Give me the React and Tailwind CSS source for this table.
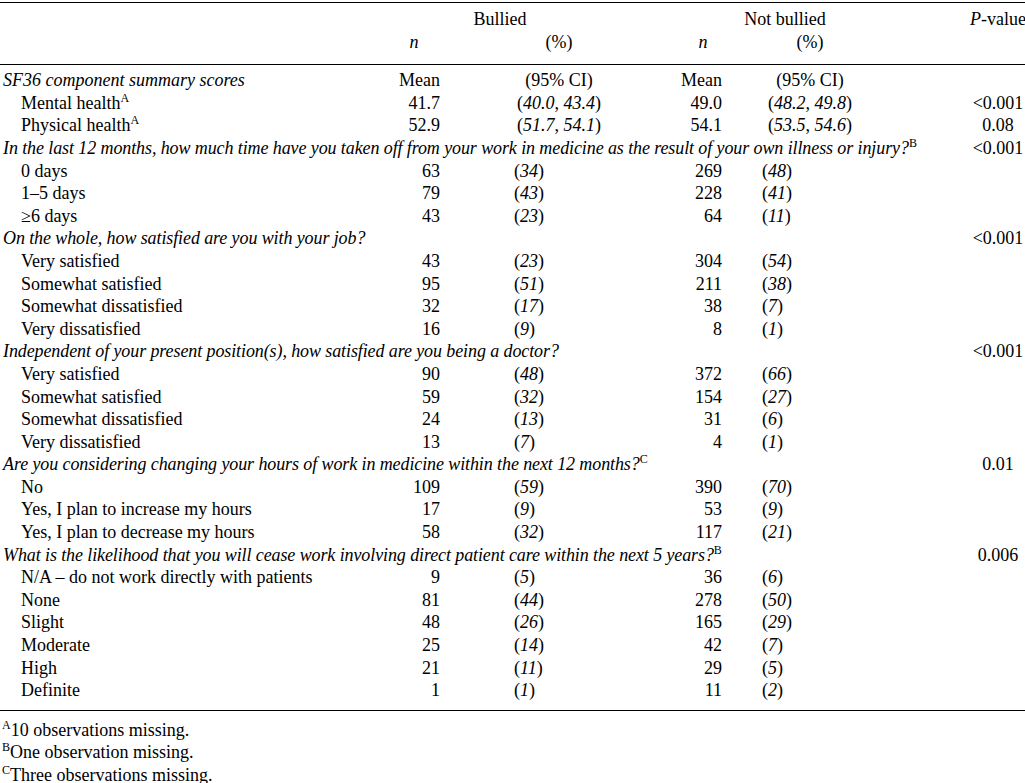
import React from 'react'

const SECTIONS = [
  {
    q: 'In the last 12 months, how much time have you taken off from your work in medicine as the result of your own illness or injury?',
    sup: 'B',
    p: '<0.001',
    rows: [
      ['0 days', '63', '34', '269', '48'],
      ['1–5 days', '79', '43', '228', '41'],
      ['≥6 days', '43', '23', '64', '11'],
    ],
  },
  {
    q: 'On the whole, how satisfied are you with your job?',
    p: '<0.001',
    rows: [
      ['Very satisfied', '43', '23', '304', '54'],
      ['Somewhat satisfied', '95', '51', '211', '38'],
      ['Somewhat dissatisfied', '32', '17', '38', '7'],
      ['Very dissatisfied', '16', '9', '8', '1'],
    ],
  },
  {
    q: 'Independent of your present position(s), how satisfied are you being a doctor?',
    p: '<0.001',
    rows: [
      ['Very satisfied', '90', '48', '372', '66'],
      ['Somewhat satisfied', '59', '32', '154', '27'],
      ['Somewhat dissatisfied', '24', '13', '31', '6'],
      ['Very dissatisfied', '13', '7', '4', '1'],
    ],
  },
  {
    q: 'Are you considering changing your hours of work in medicine within the next 12 months?',
    sup: 'C',
    p: '0.01',
    rows: [
      ['No', '109', '59', '390', '70'],
      ['Yes, I plan to increase my hours', '17', '9', '53', '9'],
      ['Yes, I plan to decrease my hours', '58', '32', '117', '21'],
    ],
  },
  {
    q: 'What is the likelihood that you will cease work involving direct patient care within the next 5 years?',
    sup: 'B',
    p: '0.006',
    rows: [
      ['N/A – do not work directly with patients', '9', '5', '36', '6'],
      ['None', '81', '44', '278', '50'],
      ['Slight', '48', '26', '165', '29'],
      ['Moderate', '25', '14', '42', '7'],
      ['High', '21', '11', '29', '5'],
      ['Definite', '1', '1', '11', '2'],
    ],
  },
]

const GRID = 'grid w-[1098px] grid-cols-[380px_60px_238px_44px_176px_200px]'

function Sup({ children }) {
  return <sup className="text-[12px] not-italic relative -top-[7px] align-baseline">{children}</sup>
}

function Pct({ v }) {
  return <>(<i>{v}</i>)</>
}

export default function App() {
  return (
    <div className="w-[1025px] min-h-[783px] overflow-hidden bg-white text-black font-['Liberation_Serif',serif] text-[18px] leading-[22.6px]">
      {/* column heads */}
      <div className="mt-[2px] border-t-[1.5px] border-black pt-[5px] pb-[11px]">
        <div className={GRID}>
          <div />
          <div className="col-span-2 text-center pr-[58px]">Bullied</div>
          <div className="col-span-2 text-center pr-[6px]">Not bullied</div>
          <div className="text-center"><i>P</i>-value</div>

          <div />
          <div className="text-center pl-[8px] italic">n</div>
          <div className="text-center">(%)</div>
          <div className="text-center pl-[6px] italic">n</div>
          <div className="text-center">(%)</div>
          <div />
        </div>
      </div>

      {/* body */}
      <div className="border-t-[1.5px] border-black pt-[4px] pb-[8px]">
        <div className={GRID}>
          <div className="pl-[3px] italic">SF36 component summary scores</div>
          <div className="text-right">Mean</div>
          <div className="text-center">(95% CI)</div>
          <div className="text-right">Mean</div>
          <div className="text-center">(95% CI)</div>
          <div />

          <div className="pl-[21px]">Mental health<Sup>A</Sup></div>
          <div className="text-right">41.7</div>
          <div className="text-center">(<i>40.0</i>, <i>43.4</i>)</div>
          <div className="text-right">49.0</div>
          <div className="text-center">(<i>48.2</i>, <i>49.8</i>)</div>
          <div className="text-center">&lt;0.001</div>

          <div className="pl-[21px]">Physical health<Sup>A</Sup></div>
          <div className="text-right">52.9</div>
          <div className="text-center">(<i>51.7</i>, <i>54.1</i>)</div>
          <div className="text-right">54.1</div>
          <div className="text-center">(<i>53.5</i>, <i>54.6</i>)</div>
          <div className="text-center">0.08</div>

          {SECTIONS.map((s) => (
            <React.Fragment key={s.q}>
              <div className="col-span-5 pl-[3px] italic whitespace-nowrap tracking-[-0.1px]">
                {s.q}{s.sup && <Sup>{s.sup}</Sup>}
              </div>
              <div className="text-center">{s.p}</div>
              {s.rows.map((r) => (
                <React.Fragment key={r[0]}>
                  <div className="pl-[21px] whitespace-nowrap">{r[0]}</div>
                  <div className="text-right">{r[1]}</div>
                  <div className="pl-[74px]"><Pct v={r[2]} /></div>
                  <div className="text-right">{r[3]}</div>
                  <div className="pl-[40px]"><Pct v={r[4]} /></div>
                  <div />
                </React.Fragment>
              ))}
            </React.Fragment>
          ))}
        </div>
      </div>

      {/* footnotes */}
      <div className="border-t-[1.5px] border-black pt-[8px] pl-[2px]">
        <div><Sup>A</Sup>10 observations missing.</div>
        <div><Sup>B</Sup>One observation missing.</div>
        <div><Sup>C</Sup>Three observations missing.</div>
      </div>
    </div>
  )
}
